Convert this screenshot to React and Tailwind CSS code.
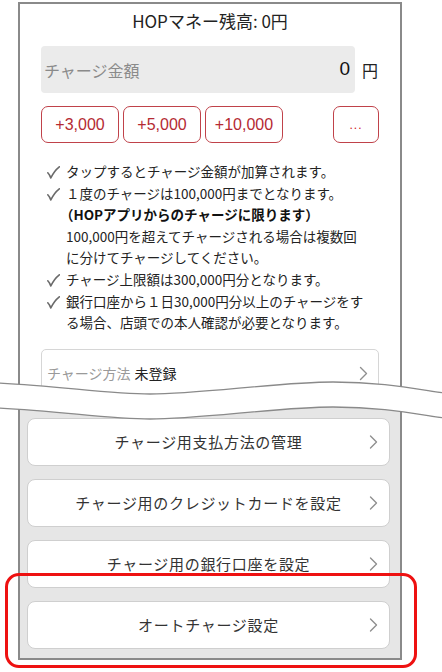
import React from "react";

const jp = { fontFamily: '"Noto Sans CJK JP", "Noto Sans", sans-serif' };
const lat = { fontFamily: '"Liberation Sans", Arial, sans-serif' };

function Chevron({ className = "" }) {
  return (
    <svg width="9" height="15" viewBox="0 0 9 15" className={className}>
      <path d="M1.5 1.5 L7.5 7.5 L1.5 13.5" fill="none" stroke="#8f8f8f" strokeWidth="1.4" strokeLinecap="round" strokeLinejoin="round" />
    </svg>
  );
}

function Check() {
  return (
    <span className="w-[19px] shrink-0 pt-[5px]">
      <svg width="13" height="13" viewBox="0 0 13 13">
        <path d="M0.8 6.8 Q2.6 8.6 3.8 12 Q7 5 12.3 0.8" fill="none" stroke="#6a6a6a" strokeWidth="1.6" strokeLinecap="round" strokeLinejoin="round" />
      </svg>
    </span>
  );
}

function AmountButton({ children, w }) {
  return (
    <button className={`${w} h-[37px] rounded-[7px] border border-[#c0424a] text-[#b52a33] text-[16px] flex items-center justify-center bg-white`} style={lat}>
      {children}
    </button>
  );
}

function MenuCard({ children }) {
  return (
    <div className="relative h-[48px] bg-white rounded-[8px] border border-[#cfcfcf] flex items-center justify-center">
      <span className="text-[15px] tracking-[0.7px] text-[#333]" style={jp}>{children}</span>
      <Chevron className="absolute right-[11px] top-1/2 -translate-y-1/2" />
    </div>
  );
}

export default function App() {
  return (
    <div className="relative w-[442px] h-[672px] bg-white overflow-hidden" style={jp}>
      <div className="ml-[18px] pt-[2px] w-[384px]">
        {/* top part */}
        <div className="h-[398px] overflow-hidden border-2 border-b-0 border-[#8a8a8a] bg-white px-[21px]">
          <div className="pt-[5px] h-[36px] text-center text-[17px] leading-[24px] text-[#222]">
            HOPマネー残高: 0円
          </div>
          <div className="mt-[6px] flex items-center">
            <div className="flex-1 h-[47px] rounded-[4px] bg-[#ebebeb] flex items-center justify-between pl-[3px] pr-[5px]">
              <span className="text-[16px] text-[#8a8a8a]">チャージ金額</span>
              <span className="text-[19px] text-[#111]" style={lat}>0</span>
            </div>
            <span className="ml-[7px] w-[17px] text-[16px] text-[#222]">円</span>
          </div>
          <div className="mt-[13px] flex gap-[4px]">
            <AmountButton w="w-[78px]">+3,000</AmountButton>
            <AmountButton w="w-[78px]">+5,000</AmountButton>
            <AmountButton w="w-[78px]">+10,000</AmountButton>
            <button className="ml-auto w-[46px] h-[37px] rounded-[7px] border border-[#c0424a] text-[#d0101a] text-[12px] tracking-[1px] flex items-center justify-center bg-white" style={lat}>
              ...
            </button>
          </div>
          <div className="mt-[18px] pl-[6px] text-[13.5px] leading-[21.6px] text-[#222] whitespace-nowrap">
            <div className="flex">
              <Check />
              <span>タップするとチャージ金額が加算されます。</span>
            </div>
            <div className="flex">
              <Check />
              <span>
                １度のチャージは100,000円までとなります。
                <br />
                <b className="inline-block -ml-[6px] font-bold text-[#111]">（HOPアプリからのチャージに限ります）</b>
                <br />
                100,000円を超えてチャージされる場合は複数回
                <br />
                に分けてチャージしてください。
              </span>
            </div>
            <div className="flex">
              <Check />
              <span>チャージ上限額は300,000円分となります。</span>
            </div>
            <div className="flex">
              <Check />
              <span>
                銀行口座から１日30,000円分以上のチャージをす
                <br />
                る場合、店頭での本人確認が必要となります。
              </span>
            </div>
          </div>
          <div className="mt-[15px] relative h-[60px] rounded-[5px] border border-[#d6d6d6] bg-white">
            <div className="absolute left-[5px] top-[13px] text-[14px] leading-[20px]">
              <span className="text-[#9a9a9a]">チャージ方法</span>
              <span className="ml-[4px] text-[#222]">未登録</span>
            </div>
            <Chevron className="absolute right-[10px] top-[16px]" />
          </div>
        </div>
        {/* bottom part */}
        <div className="border-2 border-t-0 border-[#8a8a8a] bg-[#e6e6e6] pl-[7px] pr-[10px] pt-[18px] pb-[9px] flex flex-col gap-[13px]">
          <MenuCard>チャージ用支払方法の管理</MenuCard>
          <MenuCard>チャージ用のクレジットカードを設定</MenuCard>
          <MenuCard>チャージ用の銀行口座を設定</MenuCard>
          <MenuCard>オートチャージ設定</MenuCard>
        </div>
      </div>

      {/* break wave */}
      <svg className="absolute left-0 top-[370px]" width="442" height="60" viewBox="0 370 442 60">
        <path
          d="M-2 383 C 60 386, 110 394, 150 394 C 200 394, 280 382, 333 382 C 380 382, 410 388, 444 393 L 444 418 C 410 413, 380 407, 333 407 C 280 407, 200 419, 150 419 C 110 419, 60 411, -2 408 Z"
          fill="#ffffff"
        />
        <path d="M-2 383 C 60 386, 110 394, 150 394 C 200 394, 280 382, 333 382 C 380 382, 410 388, 444 393" fill="none" stroke="#8a8a8a" strokeWidth="1.3" />
        <path d="M-2 408 C 60 411, 110 419, 150 419 C 200 419, 280 407, 333 407 C 380 407, 410 413, 444 418" fill="none" stroke="#8a8a8a" strokeWidth="1.3" />
      </svg>

      {/* highlight */}
      <div className="absolute left-[5px] top-[573px] w-[412px] h-[95px] rounded-[14px] border-[3px] border-[#ee1111]" />
    </div>
  );
}
